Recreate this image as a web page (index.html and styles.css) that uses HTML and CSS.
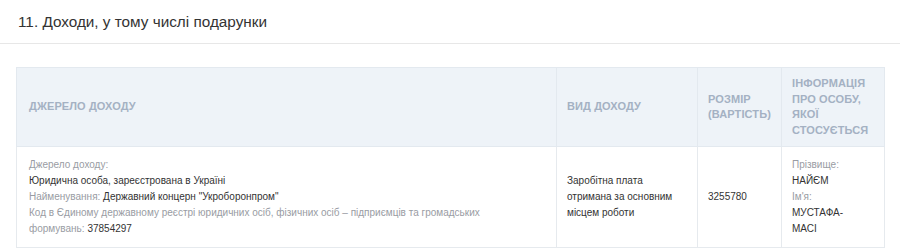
FILE: index.html
```html
<!DOCTYPE html>
<html lang="uk">
<head>
<meta charset="utf-8">
<title>Доходи</title>
<link rel="stylesheet" href="styles.css">
</head>
<body>
<h2 class="section-title">11. Доходи, у тому числі подарунки</h2>
<div class="content">
  <table class="income">
    <colgroup>
      <col class="c-source">
      <col class="c-type">
      <col class="c-size">
      <col class="c-person">
    </colgroup>
    <thead>
      <tr>
        <th class="first">Джерело доходу</th>
        <th>Вид доходу</th>
        <th>Розмір (вартість)</th>
        <th>Інформація про особу, якої стосується</th>
      </tr>
    </thead>
    <tbody>
      <tr>
        <td class="first top">
          <div><span class="lbl">Джерело доходу:</span></div>
          <div>Юридична особа, зареєстрована в Україні</div>
          <div><span class="lbl">Найменування:</span> Державний концерн "Укроборонпром"</div>
          <div><span class="lbl">Код в Єдиному державному реєстрі юридичних осіб, фізичних осіб – підприємців та громадських формувань:</span> 37854297</div>
        </td>
        <td>Заробітна плата отримана за основним місцем роботи</td>
        <td>3255780</td>
        <td class="top">
          <div class="lbl">Прізвище:</div>
          <div>НАЙЄМ</div>
          <div class="lbl">Ім'я:</div>
          <div>МУСТАФА-МАСІ</div>
        </td>
      </tr>
    </tbody>
  </table>
</div>
</body>
</html>
```
FILE: styles.css
```css
* { box-sizing: border-box; }
body {
  margin: 0;
  background: #ffffff;
  font-family: "Liberation Sans", Arial, sans-serif;
  color: #333333;
}
.section-title {
  margin: 0;
  padding: 12px 18px 11px;
  font-size: 15.3px;
  line-height: 20px;
  font-weight: normal;
  color: #333333;
  border-bottom: 1px solid #e7e7e7;
}
.content {
  padding: 23px 16px 0;
}
.income {
  width: 100%;
  table-layout: fixed;
  border-collapse: collapse;
  border: 1px solid #e3e9ef;
}
.c-source { width: 540px; }
.c-type { width: 141px; }
.c-size { width: 84px; }
.c-person { width: 103px; }
.income th {
  background: #eef3f8;
  color: #a4b1c3;
  font-size: 11px;
  font-weight: bold;
  text-transform: uppercase;
  letter-spacing: 0.1px;
  line-height: 15.6px;
  text-align: left;
  vertical-align: middle;
  padding: 8px 10px;
  border: 1px solid #e3e9ef;
}
.income td {
  font-size: 10px;
  line-height: 16px;
  color: #333333;
  vertical-align: middle;
  padding: 10px 22px 10px 10px;
  border: 1px solid #e6eaee;
}
.income .first { padding-left: 12px; }
.income td.top { vertical-align: top; }
.lbl { color: #999ca3; }
```
